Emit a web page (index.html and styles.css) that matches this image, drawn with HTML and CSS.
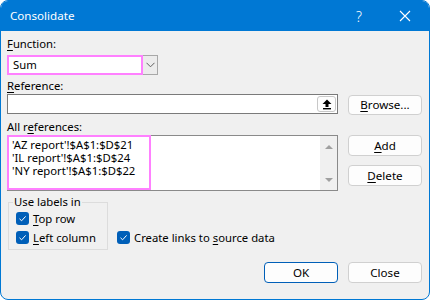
FILE: index.html
```html
<!DOCTYPE html>
<html lang="en">
<head>
    <meta charset="UTF-8">
    <title>Consolidate</title>
    <link rel="stylesheet" href="styles.css">
</head>
<body>

    <div class="window">
        <div class="title-bar">
            <span class="title">Consolidate</span>
            <span class="help">?</span>
            <svg class="close-x" width="12" height="12" viewBox="0 0 12 12">
                <path d="M1 1 L11 11 M11 1 L1 11" stroke="#fff" stroke-width="1.1" fill="none"/>
            </svg>
        </div>

        <div class="content">
            <div class="label first"><u>F</u>unction:</div>
            <div class="select">
                <div class="select-value">Sum</div>
                <div class="select-arrow">
                    <svg width="9" height="6" viewBox="0 0 9 6">
                        <path d="M0.5 0.8 L4.5 4.8 L8.5 0.8" stroke="#606060" stroke-width="1" fill="none"/>
                    </svg>
                </div>
            </div>

            <div class="label"><u>R</u>eference:</div>
            <div class="row">
                <div class="ref-input">
                    <div class="collapse-btn">
                        <svg width="10" height="11" viewBox="0 0 10 11">
                            <path d="M5 0.5 L9.5 5 L6.5 5 L6.5 8 L3.5 8 L3.5 5 L0.5 5 Z" fill="#000"/>
                            <rect x="1" y="9" width="8" height="1.4" fill="#000"/>
                        </svg>
                    </div>
                </div>
                <button class="btn browse"><u>B</u>rowse...</button>
            </div>

            <div class="label refs-label">All r<u>e</u>ferences:</div>
            <div class="row">
                <div class="ref-list">
                    <div class="ref-lines">
                        <div>'AZ report'!$A$1:$D$21</div>
                        <div>'IL report'!$A$1:$D$24</div>
                        <div>'NY report'!$A$1:$D$22</div>
                    </div>
                    <div class="scrollbar">
                        <span class="tri up"></span>
                        <span class="tri down"></span>
                    </div>
                </div>
                <div class="side-buttons">
                    <button class="btn"><u>A</u>dd</button>
                    <button class="btn"><u>D</u>elete</button>
                </div>
            </div>

            <div class="options">
                <fieldset class="group">
                    <legend>Use labels in</legend>
                    <div class="check-row">
                        <span class="checkbox"></span><span><u>T</u>op row</span>
                    </div>
                    <div class="check-row">
                        <span class="checkbox"></span><span><u>L</u>eft column</span>
                    </div>
                </fieldset>
                <div class="check-row links">
                    <span class="checkbox"></span><span>Create links to <u>s</u>ource data</span>
                </div>
            </div>

            <div class="footer">
                <button class="btn default">OK</button>
                <button class="btn">Close</button>
            </div>
        </div>
    </div>

</body>
</html>
```

FILE: styles.css
```css
body {
    margin: 0;
    background-color: #fff;
    font-family: "Noto Sans", "Open Sans", sans-serif;
    font-size: 11.3px;
    color: #000;
}
u {
    text-decoration-thickness: 1px;
    text-underline-offset: 2px;
}
.window {
    width: 430px;
    height: 300px;
    box-sizing: border-box;
    border: 1px solid #0078d4;
    border-radius: 8px;
    overflow: hidden;
    background-color: #f0f0f0;
}
.title-bar {
    height: 30px;
    background-color: #0078d4;
    color: #fff;
    display: flex;
    align-items: center;
    padding-left: 9px;
}
.title {
    flex: 1;
    font-size: 11.6px;
    padding-bottom: 1px;
}
.help {
    font-size: 14px;
    font-weight: 300;
    margin-right: 37px;
}
.close-x {
    margin-right: 18px;
}
.content {
    padding: 0 7px 0 6px;
}
.label {
    line-height: 16px;
    margin-top: 3px;
}
.label.first {
    margin-top: 5px;
}
.select {
    display: flex;
    margin-top: 3px;
    height: 20px;
}
.select-value {
    width: 136px;
    box-sizing: border-box;
    border: 2px solid #ff80ff;
    background-color: #fff;
    padding-left: 4px;
    line-height: 16px;
}
.select-arrow {
    width: 15px;
    box-sizing: border-box;
    border: 1px solid #a8a8a8;
    border-left: none;
    background-color: #ececec;
    display: flex;
    align-items: center;
    justify-content: center;
}
.row {
    display: flex;
    gap: 10px;
}
.ref-input {
    width: 331px;
    height: 20px;
    box-sizing: border-box;
    border: 1px solid #7a7a7a;
    background-color: #fff;
    display: flex;
    justify-content: flex-end;
    align-items: center;
    padding-right: 1px;
}
.collapse-btn {
    width: 19px;
    height: 16px;
    box-sizing: border-box;
    border: 1px solid #c8c8c8;
    border-radius: 3px;
    background-color: #fdfdfd;
    display: flex;
    align-items: center;
    justify-content: center;
}
.btn {
    width: 74px;
    height: 21px;
    box-sizing: border-box;
    border: 1px solid #d0d0d0;
    border-radius: 4px;
    background-color: #fdfdfd;
    font-family: inherit;
    font-size: 11.6px;
    color: #000;
    padding: 0;
    line-height: 16px;
}
.browse {
    height: 20px;
    margin-top: 1px;
}
.refs-label {
    margin-top: 4px;
}
.ref-list {
    width: 331px;
    height: 56px;
    box-sizing: border-box;
    border: 1px solid #8a8a8a;
    background-color: #fff;
    display: flex;
    position: relative;
}
.ref-lines {
    flex: 1;
    padding: 2px 0 0 4px;
    line-height: 13px;
}
/* pink highlight over the list */
.ref-lines::after {
    content: "";
    position: absolute;
    left: -1px;
    top: -1px;
    width: 144px;
    height: 55px;
    box-sizing: border-box;
    border: 2px solid #ff80ff;
}
.scrollbar {
    width: 17px;
    background-color: #f0f0f0;
    display: flex;
    flex-direction: column;
    align-items: center;
    justify-content: space-between;
    padding: 9px 0 8px;
    box-sizing: border-box;
}
.tri {
    width: 0;
    height: 0;
    border-left: 4px solid transparent;
    border-right: 4px solid transparent;
}
.tri.up {
    border-bottom: 4px solid #a0a0a0;
}
.tri.down {
    border-top: 4px solid #a0a0a0;
}
.side-buttons {
    display: flex;
    flex-direction: column;
    gap: 9px;
}
.options {
    display: flex;
    align-items: flex-end;
    margin-top: 3px;
}
.group {
    width: 100px;
    box-sizing: border-box;
    margin: 0 0 0 1px;
    padding: 0 4px 3px;
    border: 1px solid #dcdcdc;
    min-inline-size: 0;
}
.group legend {
    padding: 0 1px;
    line-height: 16px;
}
.check-row {
    display: flex;
    align-items: center;
    height: 17px;
    gap: 4px;
    padding-left: 3px;
}
.check-row + .check-row {
    margin-top: 2px;
}
.checkbox {
    width: 13px;
    height: 13px;
    border-radius: 3px;
    background-color: #005fb8;
    background-image: url("data:image/svg+xml,%3Csvg xmlns='http://www.w3.org/2000/svg' width='13' height='13'%3E%3Cpath d='M3.5 6.8 L5.6 8.8 L9.6 4.4' stroke='white' stroke-width='1' fill='none'/%3E%3C/svg%3E");
}
.links {
    margin-left: 6px;
    margin-bottom: 4px;
}
.footer {
    display: flex;
    justify-content: flex-end;
    gap: 10px;
    margin-top: 12px;
}
.btn.default {
    border-color: #005fb8;
}
```
